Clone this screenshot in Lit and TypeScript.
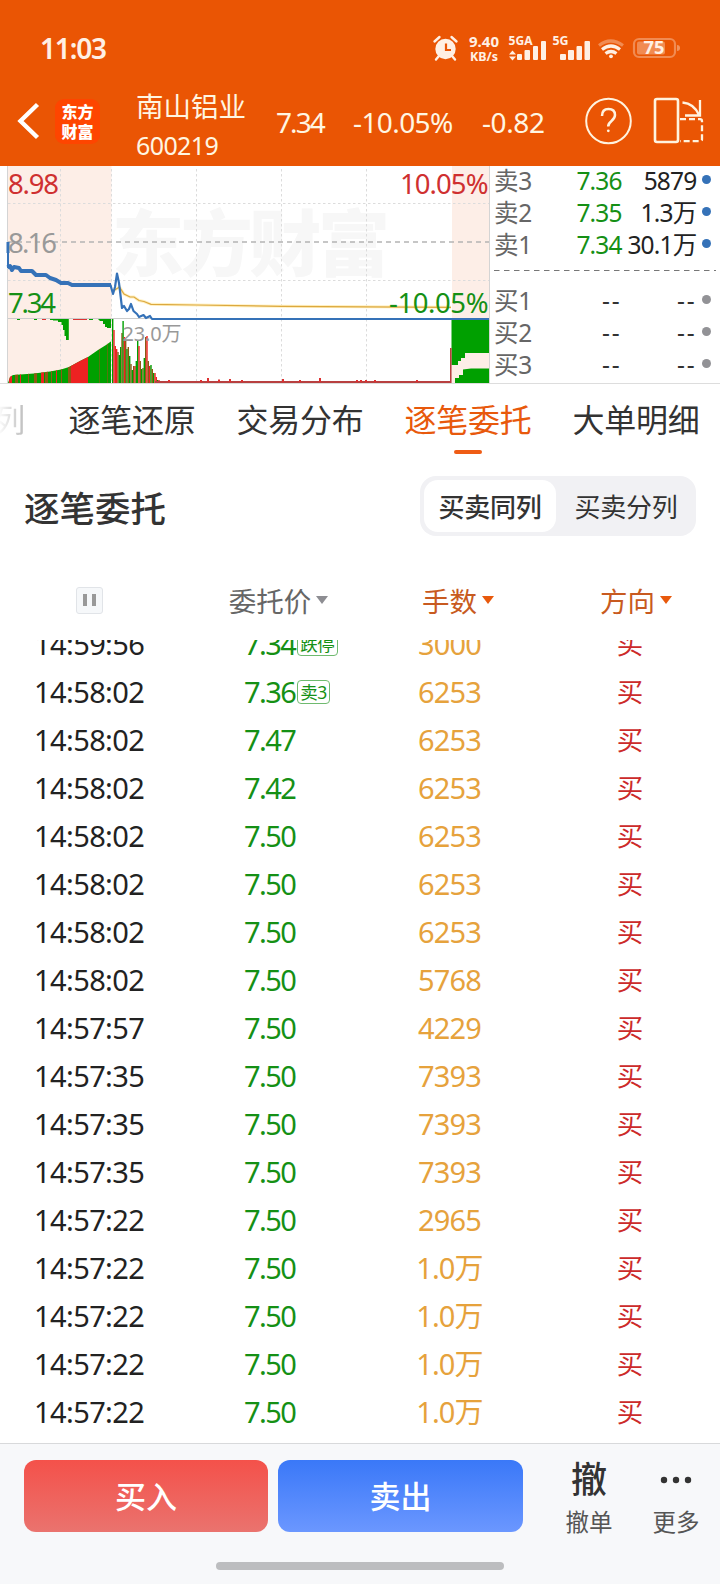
import { LitElement, html, svg, css } from "lit";
import { customElement } from "lit/decorators.js";
import { classMap } from "lit/directives/class-map.js";

const FONT = css`"Noto Sans", "Noto Sans CJK SC", sans-serif`;

type Order = { time: string; price: string; lots: string; tag?: string };

const ORDERS: Order[] = [
  { time: "14:59:56", price: "7.34", lots: "3000", tag: "跌停" },
  { time: "14:58:02", price: "7.36", lots: "6253", tag: "卖3" },
  { time: "14:58:02", price: "7.47", lots: "6253" },
  { time: "14:58:02", price: "7.42", lots: "6253" },
  { time: "14:58:02", price: "7.50", lots: "6253" },
  { time: "14:58:02", price: "7.50", lots: "6253" },
  { time: "14:58:02", price: "7.50", lots: "6253" },
  { time: "14:58:02", price: "7.50", lots: "5768" },
  { time: "14:57:57", price: "7.50", lots: "4229" },
  { time: "14:57:35", price: "7.50", lots: "7393" },
  { time: "14:57:35", price: "7.50", lots: "7393" },
  { time: "14:57:35", price: "7.50", lots: "7393" },
  { time: "14:57:22", price: "7.50", lots: "2965" },
  { time: "14:57:22", price: "7.50", lots: "1.0万" },
  { time: "14:57:22", price: "7.50", lots: "1.0万" },
  { time: "14:57:22", price: "7.50", lots: "1.0万" },
  { time: "14:57:22", price: "7.50", lots: "1.0万" },
];

@customElement("status-bar")
class StatusBar extends LitElement {
  static styles = css`
    :host { display: flex; height: 76px; padding: 20px 40px 0 40px; box-sizing: border-box; justify-content: space-between; align-items: center; color: #fff0e4; font-family: ${FONT}; }
    .clock { font-size: 28px; line-height: 30px; font-weight: 600; letter-spacing: -1.200px; }
    .icons { display: block; font-weight: 700; }
  `;
  render() {
    return html`
      <span class="clock">11:03</span>
      <svg class="icons" width="248" height="30" viewBox="432 33 248 30" fill="#fff0e4">
        <circle cx="445.500" cy="49" r="10.200" />
        <path d="M434.500 41.500l5-4.500M451.500 37l5 4.500M438.500 56.500l-2.500 3M452.500 56.500l2.500 3" stroke="#fff0e4" stroke-width="2.400" stroke-linecap="round" />
        <path d="M446 43.500v6.500h5" fill="none" stroke="#ea5504" stroke-width="2.200" />
        <text x="469" y="47" font-size="14" textLength="30" lengthAdjust="spacingAndGlyphs">9.40</text>
        <text x="470" y="60.500" font-size="12" textLength="28" lengthAdjust="spacingAndGlyphs">KB/s</text>
        <text x="508.500" y="45" font-size="11.500" textLength="24" lengthAdjust="spacingAndGlyphs">5GA</text>
        <path d="M509 54.500l3.500-4 3.500 4zM509 56.500l3.500 4 3.500-4z" />
        <rect x="517" y="54" width="5" height="6" rx="1" /><rect x="524.500" y="50" width="5.500" height="10" rx="1" /><rect x="533" y="46" width="5" height="14" rx="1" /><rect x="541" y="41" width="5" height="19" rx="1" />
        <text x="552.500" y="45" font-size="11.500" textLength="16" lengthAdjust="spacingAndGlyphs">5G</text>
        <rect x="560" y="54" width="6" height="6" rx="1" /><rect x="568" y="50" width="6" height="10" rx="1" /><rect x="576.500" y="46" width="5.500" height="14" rx="1" /><rect x="584.500" y="41" width="5.500" height="19" rx="1" />
        <g fill="none" stroke="#fff0e4" stroke-width="3.200">
          <path d="M599 45.500q11.500-9 24 0" stroke-opacity=".35" />
          <path d="M602 49.500q9-7 18 0M605.500 53.500q5.500-4 11 0" />
        </g>
        <circle cx="611" cy="56.300" r="1.900" />
        <rect x="634" y="39" width="41" height="18" rx="5" fill="none" stroke="#fff0e4" stroke-opacity=".35" stroke-width="2.200" />
        <rect x="637" y="41.500" width="28" height="13" rx="2" fill-opacity=".35" />
        <path d="M677 45q3 0 3 3t-3 3z" fill-opacity=".4" />
        <text x="643.500" y="54.300" font-size="17" textLength="21" lengthAdjust="spacingAndGlyphs">75</text>
      </svg>`;
  }
}

@customElement("title-bar")
class TitleBar extends LitElement {
  static styles = css`
    :host { display: flex; height: 90px; align-items: center; box-sizing: border-box; padding-left: 17px; color: #fff6e2; font-family: ${FONT}; }
    .back { display: block; flex: none; }
    .logo { display: flex; flex-direction: column; align-items: center; justify-content: center; width: 45px; height: 45px; margin-left: 15px; border-radius: 9px; background: #fe4500; font: 900 16px/20px "Noto Sans CJK SC", sans-serif; color: #fff; }
    .stock { width: 140px; margin-left: 36px; padding-top: 8px; display: flex; flex-direction: column; }
    .name { font-size: 27.500px; line-height: 40px; }
    .code { font-size: 25px; line-height: 37px; letter-spacing: -0.600px; }
    .quote { display: flex; width: 309px; font-size: 28px; line-height: 30px; padding-top: 2px; }
    .quote .last { width: 77px; letter-spacing: -1.900px; }
    .quote .pct { width: 129px; letter-spacing: -0.600px; }
    .quote .chg { letter-spacing: -0.400px; }
    .tools { display: block; flex: none; }
  `;
  render() {
    return html`
      <svg class="back" width="23" height="38" viewBox="0 0 23 38"><path d="M20.500 2.500 3.500 19l17 16.500" fill="none" stroke="#fff" stroke-width="4.400" /></svg>
      <span class="logo"><span>东方</span><span>财富</span></span>
      <span class="stock"><span class="name">南山铝业</span><span class="code">600219</span></span>
      <span class="quote"><span class="last">7.34</span><span class="pct">-10.05%</span><span class="chg">-0.82</span></span>
      <svg class="tools" width="122" height="50" viewBox="585 96 122 50" fill="none" stroke="#fff3df" stroke-width="2">
        <circle cx="608.500" cy="121" r="22.300" />
        <path d="M602 116q0-7 6.500-7t6.500 6q0 3-3.500 6t-3.300 5.500" stroke-width="2.500" />
        <circle cx="608.300" cy="130.800" r="1.400" fill="#fff3df" stroke="none" />
        <rect x="655" y="99" width="23" height="43" rx="2" stroke-width="2.600" />
        <path d="M682.500 102.500q11.500 1 16.500 12.500M700 100v15.500H685" stroke-width="2.300" />
        <path d="M680 119.200h20q2 0 2 2v18q0 2-2 2h-20" stroke-dasharray="6 3" stroke-width="2.300" />
      </svg>`;
  }
}

const BURST = [
  [112, 319, "g"], [113.3, 330, "r"], [114.600, 346, "r"], [116, 349, "r"], [117.300, 352, "m"], [118.600, 355, "g"], [120, 347, "g"], [121.300, 333, "m"],
  [122.400, 321, "g"], [123.700, 337, "r"], [125, 341, "m"], [126.300, 349, "g"], [127.600, 347, "m"], [129, 356, "g"], [130.300, 364, "m"], [131.600, 370, "g"],
  [133, 366, "m"], [134.300, 366, "r"], [135.600, 361, "g"], [137, 340, "g"], [138.300, 346, "r"], [139.600, 361, "m"], [141, 369, "g"], [142.300, 368, "m"],
  [143.600, 358, "g"], [145, 337, "m"], [146.300, 336, "r"], [147.600, 361, "m"], [149, 366, "r"], [150.300, 365, "g"], [151.600, 369, "m"], [153, 373, "g"],
  [154.300, 373, "r"], [155.600, 377, "r"], [157, 380, "g"], [158.300, 380, "r"],
] as const;
const INK: Record<string, string> = { r: "#ee2222", g: "#00a000", m: "#8c5a14" };
const TICKS = [[168, 380], [200, 380], [207, 378], [218, 379.500], [229, 379], [241, 380], [282, 379], [299, 380], [319, 378], [356, 380], [360, 380], [365, 380], [374, 380], [416, 380]];
const STRIPES = [[9, 3, "r"], [15, 3, "m"], [20, 1, "r"], [28, 1, "m"], [34, 3, "m"], [41, 3, "r"], [45, 3, "m"], [51, 1, "m"], [56, 1, "r"], [61, 1, "m"], [68, 3, "m"], [71, 17, "r"], [99, .6, "m"], [107, .6, "m"]] as const;
const AVERAGE = "M113 291 119.500 287 124 294 130 297 134 297 139 300.500 144 301.500 151 304.300 196 305 281 306.300 451 307.300";

@customElement("minute-chart")
class MinuteChart extends LitElement {
  static styles = css`
    :host { display: block; width: 490px; height: 217px; font-family: ${FONT}; }
    .plot { display: block; }
    .mark { font: 900 72px "Noto Sans CJK SC", sans-serif; fill: #f7f7f7; }
    .label { font-size: 27.500px; }
    .red { fill: #cf3030; } .gray { fill: #999; } .green { fill: #159015; }
  `;
  render() {
    return html`<svg class="plot" width="490" height="217" viewBox="0 166 490 217">
      <rect x="7" y="166" width="104.500" height="217" fill="#fdeee7" />
      <rect x="452" y="166" width="37" height="217" fill="#fdeee7" />
      <text class="mark" x="112" y="270" textLength="278">东方财富</text>
      <g stroke="#dcdcdc" stroke-dasharray="2.500 2.500">
        ${[60.5, 111.5, 196.5, 281.5, 366.5].map((x) => svg`<path d="M${x} 169V383" />`)}
        <path d="M8 203.500H489M8 280.500H489" />
      </g>
      <path d="M8 242H489" stroke="#b4b4b4" stroke-width="1.600" stroke-dasharray="5 4" />
      <path d="M7.500 166V383M489.500 166V383" stroke="#d4d4d4" />
      <path d="M8 318.500H489" stroke="#ccc" />
      <clipPath id="pile"><path d="M8 383 10 377 13 375 34 373.500 50 371.500 61 369.500 69 367 80 361 88 357 98 350 106 345 111.500 341V383z" /></clipPath>
      <g clip-path="url(#pile)">
        <rect x="8" y="340" width="103" height="43" fill="#00a000" />
        ${STRIPES.map(([x, w, c]) => svg`<rect x=${x} y="340" width=${w} height="43" fill=${INK[c]} />`)}
      </g>
      <path d="M17 319h3v1h-3zM34 319h3v1h-3zM50 319h18.800v21H66v-4h-1.500v-6H63v-5h-1.500v-3H58v-1.500h-5V320h-3zM89 319h4v1h-4zM98 319h13v9h-4v-1h-2v-3h-2v-3h-3z" fill="#00a000" />
      <path d="M42 319.500h4M73 319.500h14" stroke="#d33" />
      ${BURST.map(([x, y, c]) => svg`<rect x=${x} y=${y} width="1.400" height=${383 - y} fill=${INK[c]} />`)}
      <path d="M155 382H451" stroke="#b84040" stroke-width="2" />
      ${TICKS.map(([x, y]) => svg`<rect x=${x} y=${y} width="2" height=${382 - y} fill="#dd3030" />`)}
      <path d="M451.500 318H489V353H465v5h-4v3h-3v4h-6.500zM455 383v-5h4v-3h4v-5.500l8-1H489V383z" fill="#00a000" />
      <path d="M450.800 348V383" stroke="#b84040" stroke-width="1.600" />
      <path d=${AVERAGE} fill="none" stroke="#fff0c0" stroke-width="3" />
      <path d=${AVERAGE} fill="none" stroke="#dca83f" stroke-width="1.200" />
      <g fill="none" stroke="#3572b8" stroke-linejoin="round">
        <path d="M8 242V253" stroke-width="3" />
        <path d="M8 250V268" stroke-width="2" />
        <path d="M7.500 267.500 10 266 12 270 14 267 19 268 21 271 32 271 36 275 46 275 50 278 56 280 61 283 68 283 72 285 111 285" stroke-width="4" />
        <path d="M110.500 285 113 294 115 287 117 273.500 119 283 120 291 122 308 124 306 127 311 129 309 131 304 133.500 311 137 314 139 317 143.500 315 146 318 150 316 152 319 489 319" stroke-width="2.200" />
      </g>
      <text class="label red" x="8" y="193.500" textLength="51">8.98</text>
      <text class="label gray" x="8" y="252.800" textLength="49">8.16</text>
      <text class="label green" x="8" y="312.800" textLength="48">7.34</text>
      <text class="label red" x="400" y="193.500" textLength="88.500">10.05%</text>
      <text class="label green" x="389" y="312.800" textLength="99.500">-10.05%</text>
      <text class="gray" x="122.500" y="341" font-size="20" textLength="59">23.0万</text>
    </svg>`;
  }
}

@customElement("order-book")
class OrderBook extends LitElement {
  static styles = css`
    :host { display: flex; flex-direction: column; width: 230px; box-sizing: border-box; padding-left: 4px; font: 24.500px/32px ${FONT}; }
    .line { display: grid; grid-template-columns: 48px 79.500px 75px 15px; height: 32px; letter-spacing: -0.900px; color: #222; }
    .side { color: #666; letter-spacing: -0.300px; }
    .price, .vol { text-align: right; }
    .price { color: #159015; }
    .vol { letter-spacing: -0.800px; }
    .empty { color: #333; letter-spacing: 1.800px; }
    .dot { width: 9px; height: 9px; border-radius: 50%; background: #3572b8; margin: 10px 0 0 5.500px; }
    .dot.off { background: #929296; }
    .asks { margin-top: -1px; }
    .rule { display: block; margin: 8px 0 13px; }
  `;
  row(side: string, price: string, vol: string) {
    const empty = price === "--";
    return html`<div class="line"><span class="side">${side}</span><span class=${classMap({ price: true, empty })}>${price}</span><span class=${classMap({ vol: true, empty })}>${vol}</span><i class=${classMap({ dot: true, off: empty })}></i></div>`;
  }
  render() {
    return html`<div class="asks">${this.row("卖3", "7.36", "5879")}${this.row("卖2", "7.35", "1.3万")}${this.row("卖1", "7.34", "30.1万")}</div>
      <svg class="rule" width="222" height="3"><path d="M0 1.500H222" stroke="#777" stroke-width="1" stroke-dasharray="5.500 4.500" /></svg>
      <div class="bids">${this.row("买1", "--", "--")}${this.row("买2", "--", "--")}${this.row("买3", "--", "--")}</div>`;
  }
}

@customElement("order-table")
class OrderTable extends LitElement {
  static styles = css`
    :host { display: flex; flex-direction: column; height: 883px; font-family: ${FONT}; }
    .head, .row { display: grid; grid-template-columns: 180px 180px 180px 180px; align-items: center; }
    .head { height: 80px; font-size: 27.500px; line-height: 40px; color: #666; flex: none; }
    .cell { display: flex; align-items: center; justify-content: center; gap: 5px; padding-top: 3px; }
    .cell.first { padding: 0 2px 0 0; }
    .cell.price { padding-left: 17px; }
    .cell.lots { padding-left: 16px; }
    .cell.dir { padding-left: 12px; }
    .on { color: #c85a20; }
    .pause { display: flex; justify-content: center; align-items: center; gap: 5px; width: 25px; height: 25px; border: 1px solid #e1e4e8; border-radius: 3px; background: #f6f8fa; }
    .bar { width: 4px; height: 12px; background: #999; }
    .caret { width: 0; border: 6px solid transparent; border-top: 8px solid #8d8d92; border-bottom: 0; margin-top: -4px; }
    .on .caret { border-top-color: #e8590c; }
    .body { flex: 1; overflow: hidden; display: flex; flex-direction: column; justify-content: flex-end; padding-bottom: 7px; }
    .row { height: 48px; flex: none; font-size: 29px; line-height: 48px; color: #222; }
    .time { padding-left: 34px; letter-spacing: -0.600px; }
    .value { padding-left: 64px; color: #159015; display: flex; align-items: center; letter-spacing: -1.600px; }
    .tag { border: 1px solid #6fba6f; border-radius: 4px; font-size: 17.500px; line-height: 22px; padding: 0 2px; margin-left: 2px; letter-spacing: -0.300px; white-space: nowrap; }
    .amount { text-align: center; color: #e6a23c; letter-spacing: -0.900px; padding-right: 1px; }
    .buy { text-align: center; color: #cc2a2a; font-size: 26.500px; }
  `;
  render() {
    return html`<div class="head">
        <span class="cell first"><span class="pause"><i class="bar"></i><i class="bar"></i></span></span>
        <span class="cell price">委托价<i class="caret"></i></span>
        <span class="cell lots on">手数<i class="caret"></i></span>
        <span class="cell dir on">方向<i class="caret"></i></span>
      </div>
      <div class="body">${ORDERS.map((o) => html`<div class="row"><span class="time">${o.time}</span><span class="value">${o.price}${o.tag ? html`<span class="tag">${o.tag}</span>` : ""}</span><span class="amount">${o.lots}</span><span class="buy">买</span></div>`)}</div>`;
  }
}

@customElement("trade-bar")
class TradeBar extends LitElement {
  static styles = css`
    :host { display: flex; flex-direction: column; height: 141px; box-sizing: border-box; border-top: 1px solid #d8d9db; background: #f7f8fa; align-items: center; font-family: ${FONT}; }
    .actions { display: flex; align-self: stretch; height: 72px; padding: 16px 0 0 24px; }
    .btn { display: flex; align-items: center; justify-content: center; height: 72px; border-radius: 12px; color: #fff; font-size: 31px; line-height: 44px; font-weight: 500; box-sizing: border-box; }
    .buy { width: 244px; background: linear-gradient(#f4514a, #ea736e); }
    .sell { width: 245px; margin-left: 10px; background: linear-gradient(#3a78f8, #6b97ff); }
    .tool { display: flex; flex-direction: column; align-items: center; width: 60px; margin-left: 36px; color: #555; font-size: 23.500px; line-height: 30px; }
    .tool + .tool { margin-left: 27px; }
    .glyph { display: flex; flex: none; align-items: center; justify-content: center; height: 40px; margin: 0 0 7px; font-size: 36px; font-weight: 500; color: #333; }
    .home { width: 288px; height: 8px; border-radius: 4px; background: #bcbdbf; margin-top: 30px; }
  `;
  render() {
    return html`<div class="actions">
        <span class="btn buy">买入</span><span class="btn sell">卖出</span>
        <span class="tool"><span class="glyph">撤</span>撤单</span>
        <span class="tool"><span class="glyph"><svg width="32" height="8" fill="#333"><circle cx="4" cy="4" r="3.200" /><circle cx="16" cy="4" r="3.200" /><circle cx="28" cy="4" r="3.200" /></svg></span>更多</span>
      </div>
      <div class="home"></div>`;
  }
}

@customElement("app-root")
class AppRoot extends LitElement {
  static styles = css`
    :host { display: flex; flex-direction: column; width: 720px; height: 1584px; overflow: hidden; background: #fff; color: #333; font-family: ${FONT}; }
    .top { background: #ea5504; height: 166px; flex: none; }
    .market { display: flex; height: 217px; flex: none; border-bottom: 1px solid #ddd; }
    .tabs { display: flex; justify-content: flex-end; gap: 40px; height: 76px; flex: none; padding-right: 20px; font-size: 32px; line-height: 72px; white-space: nowrap; }
    .tab { width: 128px; flex: none; display: flex; flex-direction: column; align-items: center; height: 76px; letter-spacing: -0.200px; }
    .faded { width: auto; margin-right: 3px; background: linear-gradient(90deg, #fff 15%, #bbb); background-clip: text; -webkit-background-clip: text; color: transparent; }
    .active { color: #e8590c; }
    .underline { width: 28px; height: 4px; border-radius: 2px; background: #ef5c15; margin-top: -6px; }
    .section { display: flex; justify-content: space-between; align-items: center; height: 100px; flex: none; padding: 0 24px; padding-bottom: 8px; box-sizing: border-box; }
    .title { font-size: 35.500px; line-height: 50px; font-weight: 500; padding-top: 4px; }
    .segment { display: flex; gap: 4px; padding: 4px; border-radius: 16px; background: #f1f1f4; }
    .option { width: 132px; height: 52px; border-radius: 14px; font-size: 26px; line-height: 55px; text-align: center; letter-spacing: -0.300px; }
    .picked { background: #fff; font-weight: 500; }
  `;
  render() {
    return html`
      <div class="top"><status-bar></status-bar><title-bar></title-bar></div>
      <div class="market"><minute-chart></minute-chart><order-book></order-book></div>
      <div class="tabs">
        <span class="tab faded">列</span><span class="tab">逐笔还原</span><span class="tab">交易分布</span>
        <span class="tab active">逐笔委托<i class="underline"></i></span><span class="tab">大单明细</span>
      </div>
      <div class="section"><span class="title">逐笔委托</span>
        <span class="segment"><span class="option picked">买卖同列</span><span class="option">买卖分列</span></span>
      </div>
      <order-table></order-table>
      <trade-bar></trade-bar>`;
  }
}
